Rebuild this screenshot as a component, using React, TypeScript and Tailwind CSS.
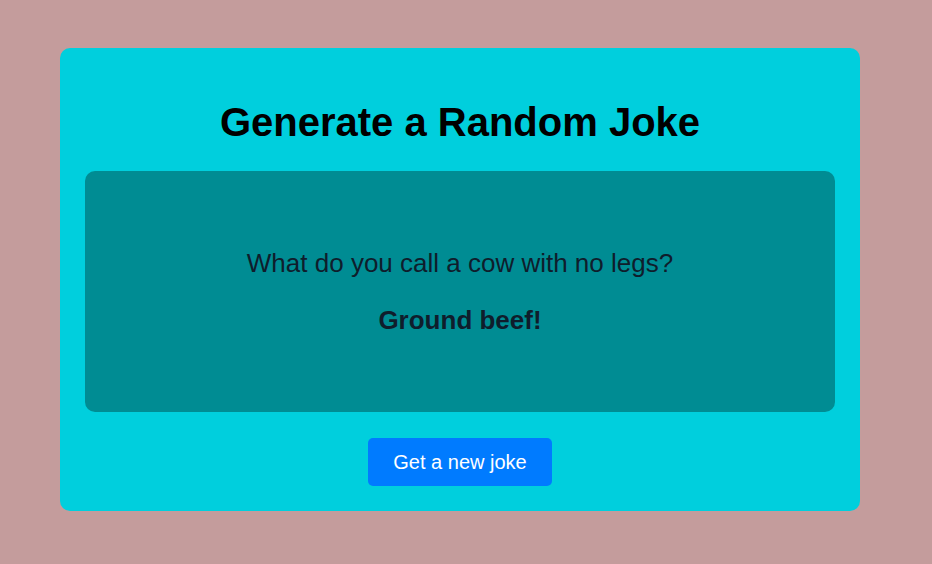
import React, { useState } from 'react';

const jokes = [
  { setup: 'What do you call a cow with no legs?', punchline: 'Ground beef!' },
  { setup: 'Why did the scarecrow win an award?', punchline: 'He was outstanding in his field!' },
];

const App = () => {
  const [index, setIndex] = useState(0);
  const joke = jokes[index];

  return (
    <div
      className="min-h-[564px] w-full bg-[#c49c9c] pt-[48px] pl-[60px]"
      style={{ fontFamily: '"Liberation Sans", Arial, sans-serif' }}
    >
      <div className="w-[800px] h-[463px] bg-[#00cfdd] rounded-[10px] px-[25px] pt-[51px] flex flex-col items-center">
        <h1 className="text-[40px] leading-[46px] font-bold text-black">
          Generate a Random Joke
        </h1>

        {/* joke box */}
        <div className="mt-[26px] w-[750px] h-[241px] bg-[#008c93] rounded-[10px] flex flex-col items-center justify-center gap-[27px] text-[#0f1d2c]">
          <p className="text-[26px] leading-[30px]">{joke.setup}</p>
          <p className="text-[26px] leading-[30px] font-bold">{joke.punchline}</p>
        </div>

        <button
          className="mt-[26px] w-[184px] h-[48px] bg-[#007bff] rounded-[5px] text-white text-[20px]"
          onClick={() => setIndex((index + 1) % jokes.length)}
        >
          Get a new joke
        </button>
      </div>
    </div>
  );
};

export default App;
